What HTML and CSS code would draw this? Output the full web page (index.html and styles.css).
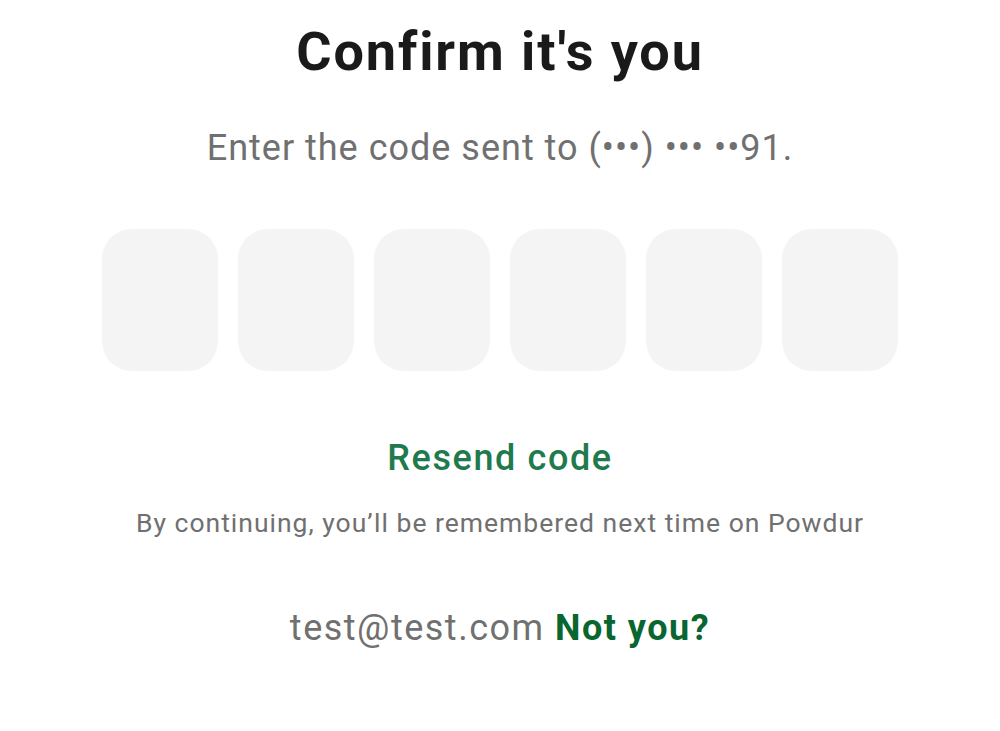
FILE: index.html
```html
<!DOCTYPE html>
<html>
<head>
<meta charset="utf-8">
<link rel="stylesheet" href="styles.css">
</head>
<body>
<main class="page">
  <h1 class="title">Confirm it's you</h1>
  <p class="subtitle">Enter the code sent to (•••) ••• ••91.</p>
  <div class="code">
    <div class="box"></div>
    <div class="box"></div>
    <div class="box"></div>
    <div class="box"></div>
    <div class="box"></div>
    <div class="box"></div>
  </div>
  <a class="resend">Resend code</a>
  <p class="note">By continuing, you’ll be remembered next time on Powdur</p>
  <p class="account">test@test.com <a class="notyou">Not you?</a></p>
</main>
</body>
</html>
```
FILE: styles.css
```css
html, body {
  margin: 0;
  padding: 0;
  background: #ffffff;
}
body {
  font-family: Roboto, "Liberation Sans", sans-serif;
  width: 1000px;
  height: 731px;
  overflow: hidden;
}
.page {
  display: flex;
  flex-direction: column;
  align-items: center;
  padding-top: 20px;
}
.title {
  margin: 0;
  font-size: 54px;
  font-weight: 700;
  color: #1a1a1a;
  line-height: 64px;
  letter-spacing: 1.9px;
}
.subtitle {
  margin: 42px 0 0;
  font-size: 36px;
  color: #707070;
  line-height: 44px;
  letter-spacing: 1px;
}
.code {
  display: flex;
  gap: 20px;
  margin-top: 59px;
}
.box {
  width: 116px;
  height: 142px;
  border-radius: 30px;
  background: #f4f4f4;
}
.resend {
  margin-top: 65px;
  font-size: 36px;
  font-weight: 500;
  color: #217a4e;
  line-height: 44px;
  letter-spacing: 1.6px;
}
.note {
  margin: 28px 0 0;
  font-size: 26.5px;
  color: #707070;
  line-height: 30px;
  letter-spacing: 1px;
}
.account {
  margin: 70px 0 0;
  font-size: 36px;
  color: #707070;
  line-height: 40px;
  letter-spacing: 1.5px;
}
.notyou {
  font-weight: 700;
  color: #0a6631;
}
```
